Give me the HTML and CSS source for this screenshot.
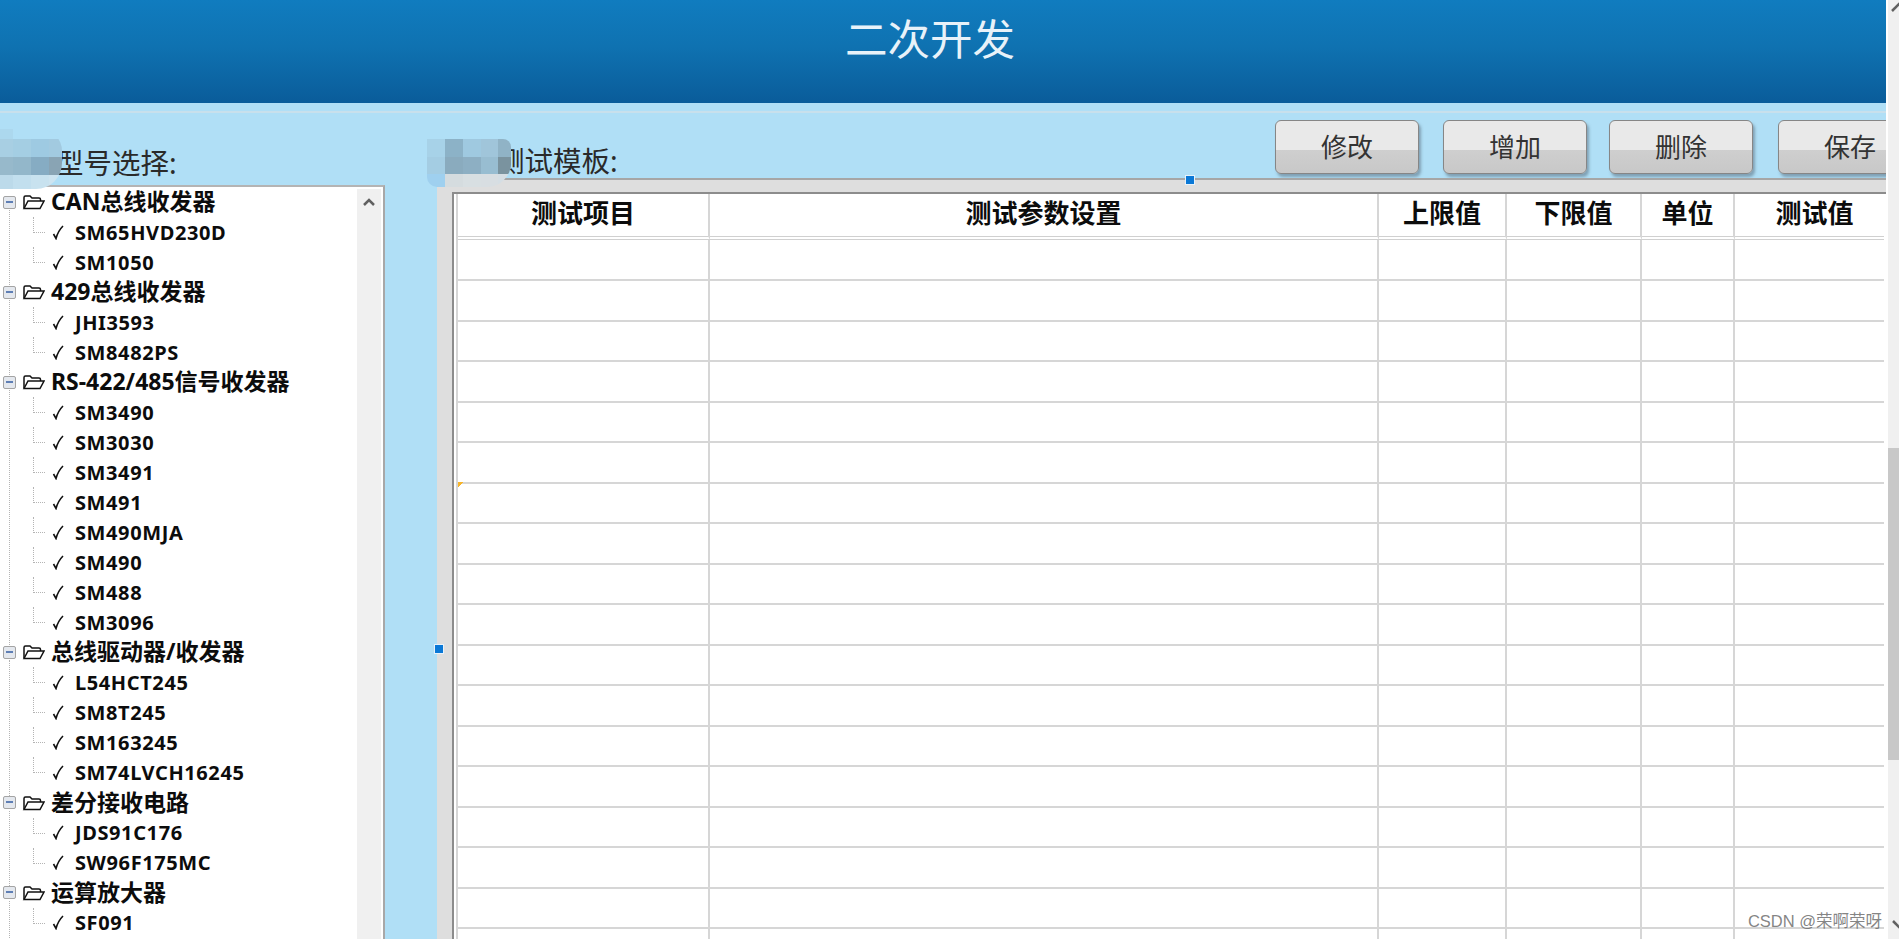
FILE: index.html
```html
<!DOCTYPE html>
<html lang="zh-CN">
<head>
    <meta charset="UTF-8">
    <title>二次开发</title>
    <link rel="stylesheet" href="styles.css">
</head>
<body>
    <svg class="sprites" width="0" height="0">
        <symbol id="folder" viewBox="0 0 23 16">
            <path d="M2 14V3.5Q2 2 3.5 2H8L10 4H17Q18.500 4 18.500 5.500V7" fill="none" stroke="#111" stroke-width="1.500"/>
            <path d="M2 14.500L6 7H22L18 14.500Z" fill="#fff" stroke="#111" stroke-width="1.500"/>
        </symbol>
        <symbol id="check" viewBox="0 0 12 15">
            <path d="M1.500 9L4 13.500Q6 6 11 1" fill="none" stroke="#111" stroke-width="1.600"/>
        </symbol>
    </svg>
    <div class="page">
        <div class="main">
            <header class="title-bar">二次开发</header>
            <div class="content">
                <div class="left-col">
                    <div class="left-label">型号选择:</div>
                    <div class="tree-panel">
                        <ul class="tree">
                            <li>
                                <div class="group"><span class="expander"></span><svg class="folder"><use href="#folder"/></svg><span class="group-name">CAN总线收发器</span></div>
                                <ul class="kids">
                                    <li class="kid"><svg class="check"><use href="#check"/></svg><span>SM65HVD230D</span></li>
                                    <li class="kid"><svg class="check"><use href="#check"/></svg><span>SM1050</span></li>
                                </ul>
                            </li>
                            <li>
                                <div class="group"><span class="expander"></span><svg class="folder"><use href="#folder"/></svg><span class="group-name">429总线收发器</span></div>
                                <ul class="kids">
                                    <li class="kid"><svg class="check"><use href="#check"/></svg><span>JHI3593</span></li>
                                    <li class="kid"><svg class="check"><use href="#check"/></svg><span>SM8482PS</span></li>
                                </ul>
                            </li>
                            <li>
                                <div class="group"><span class="expander"></span><svg class="folder"><use href="#folder"/></svg><span class="group-name">RS-422/485信号收发器</span></div>
                                <ul class="kids">
                                    <li class="kid"><svg class="check"><use href="#check"/></svg><span>SM3490</span></li>
                                    <li class="kid"><svg class="check"><use href="#check"/></svg><span>SM3030</span></li>
                                    <li class="kid"><svg class="check"><use href="#check"/></svg><span>SM3491</span></li>
                                    <li class="kid"><svg class="check"><use href="#check"/></svg><span>SM491</span></li>
                                    <li class="kid"><svg class="check"><use href="#check"/></svg><span>SM490MJA</span></li>
                                    <li class="kid"><svg class="check"><use href="#check"/></svg><span>SM490</span></li>
                                    <li class="kid"><svg class="check"><use href="#check"/></svg><span>SM488</span></li>
                                    <li class="kid"><svg class="check"><use href="#check"/></svg><span>SM3096</span></li>
                                </ul>
                            </li>
                            <li>
                                <div class="group"><span class="expander"></span><svg class="folder"><use href="#folder"/></svg><span class="group-name">总线驱动器/收发器</span></div>
                                <ul class="kids">
                                    <li class="kid"><svg class="check"><use href="#check"/></svg><span>L54HCT245</span></li>
                                    <li class="kid"><svg class="check"><use href="#check"/></svg><span>SM8T245</span></li>
                                    <li class="kid"><svg class="check"><use href="#check"/></svg><span>SM163245</span></li>
                                    <li class="kid"><svg class="check"><use href="#check"/></svg><span>SM74LVCH16245</span></li>
                                </ul>
                            </li>
                            <li>
                                <div class="group"><span class="expander"></span><svg class="folder"><use href="#folder"/></svg><span class="group-name">差分接收电路</span></div>
                                <ul class="kids">
                                    <li class="kid"><svg class="check"><use href="#check"/></svg><span>JDS91C176</span></li>
                                    <li class="kid"><svg class="check"><use href="#check"/></svg><span>SW96F175MC</span></li>
                                </ul>
                            </li>
                            <li>
                                <div class="group"><span class="expander"></span><svg class="folder"><use href="#folder"/></svg><span class="group-name">运算放大器</span></div>
                                <ul class="kids">
                                    <li class="kid"><svg class="check"><use href="#check"/></svg><span>SF091</span></li>
                                </ul>
                            </li>
                        </ul>
                        <div class="tree-scroll">
                            <svg class="tree-up" width="12" height="8" viewBox="0 0 12 8"><path d="M1 7L6 2L11 7" fill="none" stroke="#606060" stroke-width="2.500"/></svg>
                        </div>
                    </div>
                </div>
                <div class="right-col">
                    <div class="toolbar">
                        <div class="right-label">测试模板:</div>
                        <button class="btn">修改</button>
                        <button class="btn">增加</button>
                        <button class="btn btn-tight">删除</button>
                        <button class="btn">保存</button>
                    </div>
                    <div class="frame">
                        <div class="table-box">
                            <table class="grid">
                                <colgroup>
                                    <col class="c-item"><col class="c-param"><col class="c-up"><col class="c-down"><col class="c-unit"><col class="c-value">
                                </colgroup>
                                <thead>
                                    <tr><th>测试项目</th><th>测试参数设置</th><th>上限值</th><th>下限值</th><th>单位</th><th>测试值</th></tr>
                                </thead>
                                <tbody>
                                    <tr><td></td><td></td><td></td><td></td><td></td><td></td></tr>
                                    <tr><td></td><td></td><td></td><td></td><td></td><td></td></tr>
                                    <tr><td></td><td></td><td></td><td></td><td></td><td></td></tr>
                                    <tr><td></td><td></td><td></td><td></td><td></td><td></td></tr>
                                    <tr><td></td><td></td><td></td><td></td><td></td><td></td></tr>
                                    <tr><td></td><td></td><td></td><td></td><td></td><td></td></tr>
                                    <tr><td></td><td></td><td></td><td></td><td></td><td></td></tr>
                                    <tr><td></td><td></td><td></td><td></td><td></td><td></td></tr>
                                    <tr><td></td><td></td><td></td><td></td><td></td><td></td></tr>
                                    <tr><td></td><td></td><td></td><td></td><td></td><td></td></tr>
                                    <tr><td></td><td></td><td></td><td></td><td></td><td></td></tr>
                                    <tr><td></td><td></td><td></td><td></td><td></td><td></td></tr>
                                    <tr><td></td><td></td><td></td><td></td><td></td><td></td></tr>
                                    <tr><td></td><td></td><td></td><td></td><td></td><td></td></tr>
                                    <tr><td></td><td></td><td></td><td></td><td></td><td></td></tr>
                                    <tr><td></td><td></td><td></td><td></td><td></td><td></td></tr>
                                    <tr><td></td><td></td><td></td><td></td><td></td><td></td></tr>
                                    <tr><td></td><td></td><td></td><td></td><td></td><td></td></tr>
                                </tbody>
                            </table>
                        </div>
                    </div>
                </div>
            </div>
        </div>
        <div class="page-scroll">
            <svg class="page-arrow" width="11" height="14" viewBox="0 0 11 14"><path d="M4 11L12 3" fill="none" stroke="#606060" stroke-width="2.500"/></svg>
            <div class="page-thumb"></div>
            <svg class="page-arrow page-arrow-down" width="11" height="14" viewBox="0 0 11 14"><path d="M5 2L12 9" fill="none" stroke="#606060" stroke-width="2.500"/></svg>
        </div>
    </div>
    <div class="mosaic mosaic-left"><span></span><span></span><span></span><span></span><span></span><span></span><span></span><span></span><span></span><span></span><span></span><span></span><span></span><span></span><span></span><span></span></div>
    <div class="mosaic mosaic-right"><span></span><span></span><span></span><span></span><span></span><span></span><span></span><span></span><span></span><span></span><span></span><span></span><span></span><span></span><span></span></div>
    <span class="handle handle-top"></span>
    <span class="handle handle-left"></span>
    <span class="cell-mark"></span>
    <div class="watermark">CSDN @荣啊荣呀</div>
</body>
</html>
```

FILE: styles.css
```css
body {
    margin: 0;
    height: 100vh;
    overflow: hidden;
    background: #fff;
    font-family: "Noto Sans", "Noto Sans CJK SC", sans-serif;
}
ul { margin: 0; padding: 0; list-style: none; }
.sprites { position: absolute; }

.page {
    display: flex;
    height: 100%;
}
.main {
    flex: 1;
    min-width: 0;
    display: flex;
    flex-direction: column;
    overflow: hidden;
    background: #b0dff6;
}

/* title */
.title-bar {
    height: 103px;
    flex-shrink: 0;
    padding-right: 26px;
    display: flex;
    align-items: center;
    justify-content: center;
    padding-bottom: 26px;
    box-sizing: border-box;
    background: linear-gradient(#107cbf, #0f72b1 45%, #0a5c9a);
    color: #e8f2f9;
    font-size: 42.500px;
    line-height: 60px;
}

.content {
    flex: 1;
    min-height: 0;
    display: flex;
    margin-top: 8px;
    border-top: 2px solid #c8e0ec;
}

/* left column */
.left-col {
    width: 385px;
    flex-shrink: 0;
    display: flex;
    flex-direction: column;
}
.left-label {
    height: 72px;
    box-sizing: border-box;
    padding: 35px 0 0 55px;
    font-size: 28.500px;
    line-height: 30px;
    color: #2a2a2a;
}
.tree-panel {
    flex: 1;
    min-height: 0;
    display: flex;
    background: #fff;
    border-top: 2px solid #b4b4b4;
    border-right: 2px solid #a8a8a8;
}
.tree {
    flex: 1;
    min-width: 0;
    color: #0c0c0c;
    font-weight: 700;
}
.group {
    height: 30px;
    display: flex;
    align-items: center;
    font-size: 23px;
    white-space: nowrap;
}
.group-name { margin-bottom: 4px; }
.expander {
    position: relative;
    width: 13px;
    height: 13px;
    margin: 0 6px 0 3px;
    flex-shrink: 0;
    box-sizing: border-box;
    background: #e4e8ee;
    border: 1px solid #a4a4a4;
    border-radius: 2px;
}
.expander::after {
    content: "";
    position: absolute;
    left: 2px;
    right: 2px;
    top: 4px;
    height: 2px;
    background: #5f7fb5;
}
.folder {
    width: 23px;
    height: 16px;
    margin-right: 6px;
    flex-shrink: 0;
}
.kids { position: relative; }
.kids::before {
    content: "";
    position: absolute;
    left: 9px;
    top: -7px;
    bottom: -8px;
    border-left: 1px dotted #b4b4b4;
}
.kid {
    position: relative;
    height: 30.040px;
    display: flex;
    align-items: center;
    padding-left: 52px;
    font-size: 20px;
    letter-spacing: 0.600px;
    white-space: nowrap;
}
.kid::before {
    content: "";
    position: absolute;
    left: 33px;
    top: 0;
    width: 11px;
    height: 15px;
    border-left: 1px dotted #b4b4b4;
    border-bottom: 1px dotted #b4b4b4;
}
.check {
    width: 12px;
    height: 15px;
    margin-right: 11px;
    flex-shrink: 0;
}
.tree-scroll {
    width: 24px;
    margin: 2px 2px 0 0;
    flex-shrink: 0;
    background: #f0f0f0;
    text-align: center;
}
.tree-up { margin-top: 8px; }

/* right column */
.right-col {
    flex: 1;
    min-width: 0;
    margin-left: 52px;
    display: flex;
    flex-direction: column;
}
.toolbar {
    height: 65px;
    flex-shrink: 0;
    display: flex;
    padding-top: 7px;
    box-sizing: border-box;
}
.right-label {
    width: 779px;
    margin-left: 59px;
    flex-shrink: 0;
    padding-top: 26px;
    font-size: 28.500px;
    line-height: 30px;
    color: #2a2a2a;
}
.btn {
    width: 144px;
    height: 54px;
    flex-shrink: 0;
    margin-right: 24px;
    padding: 0 0 3px;
    background: linear-gradient(#e9e9e9 55%, #cfcfcf 55%, #c8c8c8);
    border: 1px solid #868686;
    border-radius: 6px;
    box-shadow: 2px 3px 3px rgba(90, 110, 125, .55);
    font-family: inherit;
    font-size: 26px;
    color: #333;
}
.btn-tight { margin-left: -2px; margin-right: 25px; }

.frame {
    flex: 1;
    min-height: 0;
    padding: 12px 0 0 15px;
    background: #dedede;
    border-top: 2px solid #a6a6a6;
}
.table-box {
    height: 100%;
    box-sizing: border-box;
    padding-left: 2px;
    background: #fff;
    border-top: 2px solid #8c8c8c;
    border-left: 2px solid #8c8c8c;
    overflow: hidden;
}
.grid {
    width: 1428px;
    table-layout: fixed;
    border-collapse: separate;
    border-spacing: 0;
    border-left: 2px solid #d6d6d6;
}
.c-item { width: 252px; }
.c-param { width: 669px; }
.c-up { width: 128px; }
.c-down { width: 135px; }
.c-unit { width: 93px; }
.c-value { width: 149px; }
.grid th {
    height: 46px;
    box-sizing: border-box;
    padding: 0 0 5px;
    border-right: 2px solid #d6d6d6;
    border-bottom: 4px double #d0d0d0;
    font-size: 26px;
    line-height: 30px;
    font-weight: 700;
    color: #0c0c0c;
}
.grid td {
    height: 40.500px;
    box-sizing: border-box;
    padding: 0;
    border-right: 2px solid #d6d6d6;
    border-bottom: 2px solid #d6d6d6;
}
.grid tbody tr:first-child td { height: 41px; }
.grid tr > :last-child { border-right: 0; }
.grid th:last-child { padding-left: 10px; }

/* window scrollbar */
.page-scroll {
    width: 11px;
    flex-shrink: 0;
    margin-left: 2px;
    display: flex;
    flex-direction: column;
    background: #f0f0f0;
    overflow: hidden;
}
.page-arrow { flex-shrink: 0; display: block; }
.page-thumb {
    height: 312px;
    flex-shrink: 0;
    margin-top: 434px;
    background: #c8c8c8;
}
.page-arrow-down { margin-top: auto; margin-bottom: 6px; }

/* pixelated censor blocks */
.mosaic {
    position: absolute;
    display: grid;
    overflow: hidden;
}
.mosaic-left {
    left: 0;
    top: 129px;
    width: 62px;
    height: 60px;
    grid-template-columns: 13px 18px 18px 13px;
    grid-template-rows: 10px 18px 18px 14px;
    border-radius: 0 22px 26px 0;
}
.mosaic-left span:nth-child(1) { background: #acd8ee; }
.mosaic-left span:nth-child(2) { background: #b0dff6; }
.mosaic-left span:nth-child(3) { background: #b0dff6; }
.mosaic-left span:nth-child(4) { background: #b0dff6; }
.mosaic-left span:nth-child(5) { background: #a8cfe3; }
.mosaic-left span:nth-child(6) { background: #a4cee3; }
.mosaic-left span:nth-child(7) { background: #9ecae2; }
.mosaic-left span:nth-child(8) { background: #a2cae0; }
.mosaic-left span:nth-child(9) { background: #97b9cb; }
.mosaic-left span:nth-child(10) { background: #93b7ca; }
.mosaic-left span:nth-child(11) { background: #86acc3; }
.mosaic-left span:nth-child(12) { background: #89a4b4; }
.mosaic-left span:nth-child(13) { background: #bcdaea; }
.mosaic-left span:nth-child(14) { background: #c2dfee; }
.mosaic-left span:nth-child(15) { background: #c8e2ef; }
.mosaic-left span:nth-child(16) { background: #cde4f0; }
.mosaic-right {
    left: 427px;
    top: 139px;
    width: 84px;
    height: 48px;
    grid-template-columns: 18px 18px 18px 17px 13px;
    grid-template-rows: 18px 17px 13px;
    border-radius: 0 8px 24px 10px;
}
.mosaic-right span:nth-child(1) { background: #a7d2e8; }
.mosaic-right span:nth-child(2) { background: #8cb2c7; }
.mosaic-right span:nth-child(3) { background: #9fc9e0; }
.mosaic-right span:nth-child(4) { background: #a0c5da; }
.mosaic-right span:nth-child(5) { background: #90b3c6; }
.mosaic-right span:nth-child(6) { background: #a4cde3; }
.mosaic-right span:nth-child(7) { background: #8aabbe; }
.mosaic-right span:nth-child(8) { background: #8dafc3; }
.mosaic-right span:nth-child(9) { background: #98bdd1; }
.mosaic-right span:nth-child(10) { background: #7a939f; }
.mosaic-right span:nth-child(11) { background: #9fd0ef; }
.mosaic-right span:nth-child(12) { background: #d5dcdf; }
.mosaic-right span:nth-child(13) { background: #d8dfe2; }
.mosaic-right span:nth-child(14) { background: #d8dee2; }
.mosaic-right span:nth-child(15) { background: #d5dee4; }

.handle {
    position: absolute;
    width: 10px;
    height: 10px;
    box-sizing: border-box;
    background: #0a78d6;
    border: 1px solid #e8f2fa;
}
.handle-top { left: 1185px; top: 175px; }
.handle-left { left: 434px; top: 644px; }
.cell-mark {
    position: absolute;
    left: 458px;
    top: 482px;
    width: 6px;
    height: 6px;
    background: linear-gradient(135deg, #f7b52c 50%, transparent 50%);
}
.watermark {
    position: absolute;
    right: 17px;
    top: 910px;
    font-family: "Liberation Sans", "Noto Sans CJK SC", sans-serif;
    font-size: 16.500px;
    line-height: 22px;
    color: rgba(100, 100, 100, .8);
    white-space: nowrap;
}
```
